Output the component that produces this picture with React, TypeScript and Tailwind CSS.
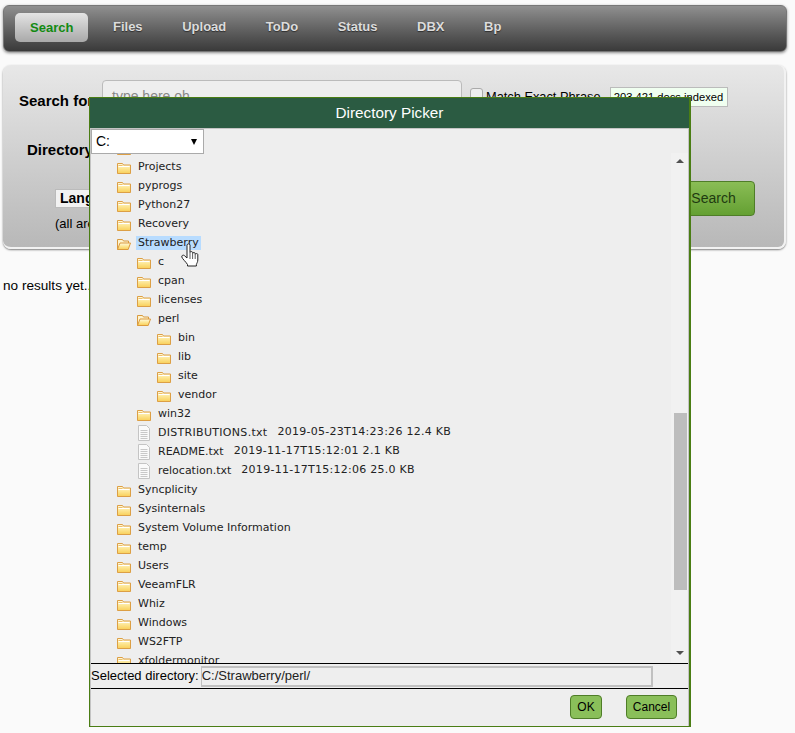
import React from "react";

const arial = "font-['Liberation_Sans',Arial,sans-serif]";

function Folder({ open }: { open?: boolean }) {
  return (
    <svg width="16" height="16" viewBox="0 0 16 16" className="shrink-0">
      <defs>
        <linearGradient id="fg" x1="0" y1="0" x2="0" y2="1">
          <stop offset="0" stopColor="#fffbe6" />
          <stop offset="0.45" stopColor="#fde89a" />
          <stop offset="1" stopColor="#f9cf58" />
        </linearGradient>
      </defs>
      {open ? (
        <>
          <path d="M1.5 14.5V4.5h5l1 1.5h5v2" fill="#fdf3cf" stroke="#d99a3e" />
          <path d="M1.5 14.5L4 8h10.5l-2.3 6.5z" fill="url(#fg)" stroke="#dc9a3c" strokeLinejoin="round" />
        </>
      ) : (
        <>
          <path d="M1.5 14.5V4.5h5l1 1.5h7v8.5z" fill="url(#fg)" stroke="#dc9f45" strokeLinejoin="round" />
          <path d="M2.5 7.5h11" stroke="#fff" />
          <path d="M2.5 6.5h4" stroke="#eebf68" />
        </>
      )}
    </svg>
  );
}

function FileIcon() {
  return (
    <svg width="16" height="16" viewBox="0 0 16 16" className="shrink-0">
      <path d="M2.5 0.5h8l3 3v12h-11z" fill="#fafafa" stroke="#c4c4c4" />
      <path d="M4.5 5.5h7M4.5 7.5h7M4.5 9.5h7M4.5 11.5h7M4.5 13.5h7" stroke="#c8c8c8" />
    </svg>
  );
}

type Row = { t: string; d: number; file?: boolean; meta?: string; open?: boolean; sel?: boolean; wide?: boolean };

const rows: Row[] = [
  { t: "Programs", d: 0 },
  { t: "Projects", d: 0 },
  { t: "pyprogs", d: 0 },
  { t: "Python27", d: 0 },
  { t: "Recovery", d: 0 },
  { t: "Strawberry", d: 0, open: true, sel: true },
  { t: "c", d: 1 },
  { t: "cpan", d: 1 },
  { t: "licenses", d: 1 },
  { t: "perl", d: 1, open: true },
  { t: "bin", d: 2 },
  { t: "lib", d: 2 },
  { t: "site", d: 2 },
  { t: "vendor", d: 2 },
  { t: "win32", d: 1 },
  { t: "DISTRIBUTIONS.txt", d: 1, file: true, wide: true, meta: "2019-05-23T14:23:26 12.4 KB" },
  { t: "README.txt", d: 1, file: true, meta: "2019-11-17T15:12:01 2.1 KB" },
  { t: "relocation.txt", d: 1, file: true, meta: "2019-11-17T15:12:06 25.0 KB" },
  { t: "Syncplicity", d: 0 },
  { t: "Sysinternals", d: 0 },
  { t: "System Volume Information", d: 0 },
  { t: "temp", d: 0 },
  { t: "Users", d: 0 },
  { t: "VeeamFLR", d: 0 },
  { t: "Whiz", d: 0 },
  { t: "Windows", d: 0 },
  { t: "WS2FTP", d: 0 },
  { t: "xfoldermonitor", d: 0 },
];

const indent = ["pl-[25px]", "pl-[45px]", "pl-[65px]"];

const tabs = ["Files", "Upload", "ToDo", "Status", "DBX", "Bp"];

export default function App() {
  return (
    <div className={`relative h-[733px] w-[795px] overflow-hidden bg-[#fafafa] text-black ${arial}`}>
      {/* Nav */}
      <div className="mx-[3px] mt-[5px] flex h-[47px] w-[784px] items-start gap-[9.6px] rounded-[6px] border border-[#777] bg-gradient-to-b from-[#909090] to-[#3a3a3a] pl-[11px] pt-[7px] shadow-[0_1px_3px_rgba(0,0,0,0.45)]">
        <div className="flex h-[29px] items-center rounded-[5px] bg-gradient-to-b from-[#e4e4e4] to-[#a9a9a9] px-[15px] text-[13px] font-bold text-[#128a12]">
          Search
        </div>
        {tabs.map((t) => (
          <div key={t} className="flex h-[27px] items-center px-[15px] text-[13px] font-bold text-[#dcdcdc] [text-shadow:0_1px_1px_rgba(0,0,0,0.5)]">
            {t}
          </div>
        ))}
      </div>

      {/* Search panel */}
      <div className="ml-[3px] mt-[13px] flex h-[184px] w-[783px] flex-col rounded-[8px] border-b-2 border-r-2 border-[#f2f2f2] bg-gradient-to-b from-[#e8e8e8] to-[#b8b8b8] shadow-[0_1px_2px_rgba(0,0,0,0.5)]">
        <div className="mt-[15px] flex h-[32px] items-start">
          <span className="ml-[16px] mt-[12px] w-[83px] text-[15px] font-bold leading-[17px] whitespace-nowrap">Search for</span>
          <div className="flex h-[32px] w-[360px] items-center rounded-[4px] border border-[#bbb] bg-[#eee] pl-[9px] text-[14px] text-[#888]">
            type here oh
          </div>
          <div className="ml-[8px] mt-[8px] h-[13px] w-[13px] rounded-[3px] border border-[#aaa] bg-[#eee]" />
          <span className="ml-[3px] mt-[8px] text-[12.8px] leading-[17px] whitespace-nowrap">Match Exact Phrase</span>
          <span className="ml-[9px] mt-[7px] flex h-[20px] w-[118px] items-center justify-center whitespace-nowrap border border-[#bbb] bg-[#f0fff0] text-[11.2px]">203,421 docs indexed</span>
        </div>
        <div className="mt-[26px] h-[22px]">
          <span className="ml-[24px] text-[15px] font-bold leading-[20px]">Directory</span>
        </div>
        <div className="mt-[21px] flex items-start">
          <div className="ml-[52px] mt-[8px] flex flex-col items-start">
            <div className="flex h-[19px] w-[60px] items-center border border-[#bbb] bg-[#f2f2f2] pl-[4px] text-[14px] font-bold">Languages</div>
            <div className="mt-[6px] text-[13px] whitespace-nowrap">(all are searched)</div>
          </div>
          <div className="ml-auto mr-[29px] flex h-[35px] w-[80px] items-center justify-center rounded-[4px] border border-[#4f7d28] bg-gradient-to-b from-[#8abd55] to-[#64a032] pr-[3px] text-[14px] text-[#1f3a10]">
            Search
          </div>
        </div>
      </div>

      <div className="ml-[3px] mt-[27px] text-[13.6px] leading-[20px]">no results yet...</div>

      {/* Directory picker dialog */}
      <div className="absolute left-[89px] top-[97px] flex h-[630px] w-[602px] flex-col border border-r-2 border-[#4a7d14] bg-[#eee] text-[#222]">
        <div className="flex h-[30px] shrink-0 items-center justify-center bg-[#2b5b42] text-[15.3px] text-white">Directory Picker</div>
        <div className="flex min-h-0 flex-1 flex-col border-r border-l border-[#c4c4c4]">
          <div className="relative h-[535px] shrink-0 overflow-hidden border-t border-[#c4c4c4] pt-[9px] font-['DejaVu_Sans',Verdana,sans-serif] text-[11px]">
            {rows.map((r) => (
              <div key={r.t} className={`flex h-[19px] items-center ${indent[r.d]}`}>
                {r.file ? <FileIcon /> : <Folder open={r.open} />}
                <span className={`ml-[4px] flex h-[14px] items-center whitespace-pre px-[2px] leading-[14px] ${r.sel ? "bg-[#b8dcff]" : ""} ${r.wide ? "tracking-[0.3px]" : ""}`}>{r.t}</span>
                {r.meta && <span className="ml-[8px] whitespace-pre tracking-[0.27px]">{r.meta}</span>}
              </div>
            ))}

            {/* drive select */}
            <div className={`absolute left-0 top-0 flex h-[25px] w-[113px] items-center justify-between border border-[#aaa] bg-white pl-[4px] pr-[6px] text-[14px] text-black ${arial}`}>
              <span>C:</span>
              <span className="h-0 w-0 border-x-[3.5px] border-t-[6px] border-x-transparent border-t-black" />
            </div>

            {/* scrollbar */}
            <div className="absolute bottom-0 right-0 top-[24px] flex w-[17px] flex-col items-center bg-[#f1f1f1]">
              <span className="mt-[6px] h-0 w-0 border-x-[4px] border-b-[4px] border-x-transparent border-b-[#505050]" />
              <div className="ml-[1px] mt-[250px] h-[177px] w-[13px] bg-[#bdbdbd]" />
              <span className="mt-[61px] h-0 w-0 border-x-[4px] border-t-[4px] border-x-transparent border-t-[#505050]" />
            </div>

            {/* hand cursor */}
            <svg width="19" height="25" viewBox="0 0 19 25" className="absolute left-[90px] top-[114px]">
              <path
                d="M6 2.2c0-1.8 3-1.8 3 0V9.5c0-1.2 2.6-1.2 2.6 0v1c0-1.2 2.6-1.2 2.6 0v1c0-1.2 2.6-1.2 2.6 0v5.5c0 2-1 3-1.4 4.5v1.5H6.5v-1.5C5.5 19.5 1 15.5.8 14c-.3-1.6 1.4-2.4 2.6-1.4L6 15z"
                fill="#fff"
                stroke="#222"
                strokeWidth="1"
                strokeLinejoin="round"
              />
              <path d="M9 10v6M11.6 11v5M14.2 12v4" stroke="#333" strokeWidth="0.8" />
            </svg>
          </div>

          {/* selected */}
          <div className={`flex h-[26px] shrink-0 items-center border-y border-black text-[13px] text-black ${arial}`}>
            <span className="whitespace-nowrap">Selected directory:</span>
            <div className="ml-[2px] flex h-[21px] w-[452px] items-center border-2 border-l-[1px] border-[#c0c0c0] bg-[#eee] text-[#222]">C:/Strawberry/perl/</div>
          </div>

          {/* footer */}
          <div className={`flex flex-1 items-start justify-end gap-[24px] pr-[11px] pt-[6px] text-[12px] text-black ${arial}`}>
            <div className="flex h-[24px] w-[32px] items-center justify-center rounded-[4px] border border-[#4f7d28] bg-[#8abf5a]">OK</div>
            <div className="flex h-[24px] w-[51px] items-center justify-center rounded-[4px] border border-[#4f7d28] bg-[#8abf5a]">Cancel</div>
          </div>
        </div>
      </div>
    </div>
  );
}
